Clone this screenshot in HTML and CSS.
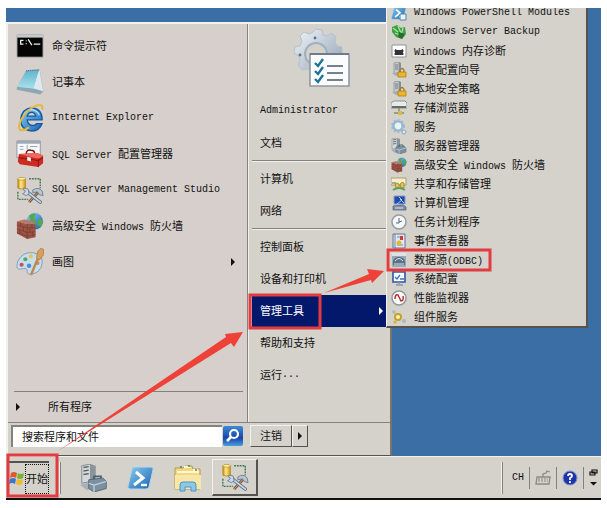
FILE: index.html
```html
<!DOCTYPE html>
<html lang="zh-CN">

<head>
  <meta charset="UTF-8" />
  <title>开始菜单</title>
  <link rel="stylesheet" href="styles.css">
</head>

<body>
  <!-- 共用图标 -->
  <svg class="defs" width="0" height="0" aria-hidden="true">
    <defs>
      <linearGradient id="blue" x1="0" y1="0" x2="1" y2="1">
        <stop offset="0" stop-color="#8ccdf0" />
        <stop offset="1" stop-color="#1763b0" />
      </linearGradient>
      <linearGradient id="gold" x1="0" y1="0" x2="1" y2="0">
        <stop offset="0" stop-color="#c98f10" />
        <stop offset=".4" stop-color="#ffe88a" />
        <stop offset="1" stop-color="#d99a14" />
      </linearGradient>
      <linearGradient id="steel" x1="0" y1="0" x2="1" y2="1">
        <stop offset="0" stop-color="#f1f5fa" />
        <stop offset="1" stop-color="#8d9dae" />
      </linearGradient>
      <linearGradient id="pad" x1="0" y1="0" x2="0" y2="1">
        <stop offset="0" stop-color="#5fb4cc" />
        <stop offset="1" stop-color="#a9e0ec" />
      </linearGradient>
    </defs>
    <symbol id="i-tools" viewBox="0 0 30 30">
      <path d="M14 3h12v10M2 17v8h11" fill="none" stroke="#3f7a4c" stroke-width="1.5" stroke-dasharray="2 1" />
      <path d="M2 3v10q4 2 8 0V3z" fill="url(#gold)" stroke="#a3740f" stroke-width=".7" />
      <ellipse cx="6" cy="3" rx="4" ry="1.5" fill="#fff0a8" stroke="#b58a20" stroke-width=".7" />
      <path d="M14 28 25 16" stroke="#7b5a3c" stroke-width="3" />
      <path d="M14 28 24 17" stroke="#d0a36c" stroke-width="1" />
      <path d="M18 15q6-4 10 1l1 5-4-1-2-3-5 1z" fill="#b9c6d2" stroke="#5d6d7d" stroke-width=".8" />
      <path d="M12 17 26 28" stroke="#5c7187" stroke-width="3.6" stroke-linecap="round" />
      <path d="M12 17 26 28" stroke="#c7d8e8" stroke-width="2" stroke-linecap="round" />
      <path d="M9 13l4 1 1 5-3 2-4-2 2-1 1-2-2-1z" fill="#c9d9e8" stroke="#5c7187" stroke-width=".8" />
    </symbol>
    <symbol id="i-firewall" viewBox="0 0 30 30">
      <circle cx="20" cy="10" r="9" fill="url(#blue)" />
      <path d="M14 4q5-4 7-1l-2 4 3 2-2 4-4-2zM24 7l5 2-2 7-4-2z" fill="#55a84c" />
      <path d="M1 10l8 2 12 1v14l-9 2-11-6z" fill="#9b5446" />
      <path d="M1 10l8 2 12 1-3-3-9-2z" fill="#b9796a" />
      <path d="M1 14l11 3h9M1 18l11 4 9-1M1 22l11 4 9-2M12 13v16M5 11v4M8 16v4M4 19v4M17 13v4M15 17v5M18 21v5" fill="none" stroke="#6d3228" stroke-width=".6" />
    </symbol>
    <symbol id="i-server" viewBox="0 0 16 16">
      <path d="M3 1l5-1v11l-5 1z" fill="#c4cace" stroke="#7b8388" stroke-width=".6" />
      <path d="M8 0l2 1v10l-2 1z" fill="#868f94" />
      <path d="M4 3h3M4 5h3M4 7h3" stroke="#555e64" stroke-width=".7" />
      <path d="M1 11l7-1 4 2-7 2z" fill="#a4abb0" />
    </symbol>
    <symbol id="i-server-lock" viewBox="0 0 16 16">
      <use href="#i-server" width="16" height="16" />
      <path d="M9 10V8q2-3 4 0v2" fill="none" stroke="#9b7a2c" stroke-width="1.3" />
      <path d="M7 10h8v5H7z" fill="#eeb42c" stroke="#ab7610" stroke-width=".7" />
    </symbol>
    <symbol id="i-server-tools" viewBox="0 0 16 16">
      <path d="M1 1l5-1v10l-5 1z" fill="#d3d8db" stroke="#7b8388" stroke-width=".5" />
      <path d="M6 0l3 1v9l-3 1z" fill="#8b9499" />
      <path d="M2 2l3-.5M2 4l3-.5M2 6l3-.5" stroke="#555e64" stroke-width=".8" />
      <path d="M0 12l7-2 3 2-6 3z" fill="#a9b0b4" />
      <path d="M8 9V7h4v2" fill="none" stroke="#4d6172" />
      <path d="M5 9l8-1 2 2v4l-7 2-3-2z" fill="#7c90a2" stroke="#4d6172" stroke-width=".5" />
      <path d="M5 11l3 1 7-2M8 12v4" fill="none" stroke="#c8d4dd" stroke-width=".7" />
    </symbol>
    <symbol id="i-ps" viewBox="0 0 28 28">
      <path d="M6 3h18q3 0 2 3l-4 17q-1 2-3 2H3q-3 0-2-3L5 5q0-2 1-2z" fill="url(#blue)" stroke="#b9d6e8" />
      <path d="M9 8l7 6-9 7" fill="none" stroke="#fff" stroke-width="3" />
      <path d="M14 21h6" stroke="#fff" stroke-width="2.4" />
    </symbol>
  </svg>

  <div class="desktop">
    <div class="workspace">
      <nav class="start-menu">
        <div class="columns">
          <div class="programs">
            <a class="program" href="#">
              <svg class="icon-lg" viewBox="0 0 30 30">
                <path d="M1 3h28v24H1z" fill="#050505" stroke="#b5b8bc" />
                <path d="M1 3h28v3H1z" fill="#c5cad0" />
                <path d="M8 9H5v4h3M11 9v1M11 12v1M13 8l4 6M19 13h7" fill="none" stroke="#eee" stroke-width="1.4" />
              </svg>
              <span>命令提示符</span>
            </a>
            <a class="program" href="#">
              <svg class="icon-lg" viewBox="0 0 30 30">
                <path d="M11 3l14-1 4 23-3 3-25-5z" fill="#e7f1f4" stroke="#9aabb2" stroke-width=".7" />
                <path d="M11 3l14-1-6 20L1 20z" fill="url(#pad)" />
                <path d="M25 2l4 23-10-3z" fill="#dde9ee" />
                <path d="M19 22l10 3-3 3-25-5v-3z" fill="#8ba8b3" />
                <path d="M11 3l14-1" stroke="#596e78" stroke-width="1.4" stroke-dasharray="1 1" />
              </svg>
              <span>记事本</span>
            </a>
            <a class="program" href="#">
              <svg class="icon-lg" viewBox="0 0 30 30">
                <path d="M28 17H12q1 6 6 6 3 0 4-2h6q-3 8-11 8Q5 28 5 17 6 5 17 4q11 1 11 13zM12 13h9q-1-4-4-4-4 0-5 4z" fill="url(#blue)" stroke="#0f59a5" stroke-width="1.4" />
                <path d="M8 12q3-6 9-6 6 1 8 6" fill="none" stroke="#b4e2fa" stroke-width="1.2" />
                <path d="M6 28C-2 28 8 7 21 2q9-3 7 4M6 28q4 0 8-3" fill="none" stroke="#e8b73d" stroke-width="2.2" />
              </svg>
              <span class="en">Internet Explorer</span>
            </a>
            <a class="program" href="#">
              <svg class="icon-lg" viewBox="0 0 30 30">
                <path d="M1 1h25v18H1z" fill="#f8f9fb" stroke="#8b929b" />
                <path d="M1 1h25v3H1z" fill="#9faab7" />
                <path d="M4 7h4M4 10h4M12 5v5M15 7h8" stroke="#8fa0b5" />
                <path d="M11 15q0-5 5-4 4 0 4 4" fill="none" stroke="#6d1713" stroke-width="1.6" />
                <path d="M3 15l20-1 6 3v8l-5 4-20-3-2-3z" fill="#cc2a22" />
                <path d="M3 15l20-1 6 3-5 3z" fill="#ee6a5c" />
                <path d="M24 20v9M3 19l21 3 5-3" fill="none" stroke="#841410" />
                <path d="M12 18l4 1v4l-4-1z" fill="#eee" />
              </svg>
              <span><span class="en">SQL Server </span>配置管理器</span>
            </a>
            <a class="program" href="#">
              <svg class="icon-lg"><use href="#i-tools" /></svg>
              <span class="en">SQL Server Management Studio</span>
            </a>
            <a class="program" href="#">
              <svg class="icon-lg"><use href="#i-firewall" /></svg>
              <span>高级安全<span class="en"> Windows </span>防火墙</span>
            </a>
            <a class="program" href="#">
              <svg class="icon-lg" viewBox="0 0 30 30">
                <path d="M2 14Q7 4 18 5q11 2 10 11-1 10-11 12-5 1-5-3 0-4-4-3-7 2-7-2 0-3 1-6z" fill="#c5dff0" stroke="#7a9db9" />
                <circle cx="6" cy="18" r="2.2" fill="#cf4a5a" />
                <circle cx="10" cy="12" r="2.2" fill="#58a85b" />
                <circle cx="16" cy="9" r="2.2" fill="#e9c64a" />
                <circle cx="14" cy="19" r="2.4" fill="#4d8fd0" />
                <circle cx="23" cy="16" r="2.2" fill="#dd844e" />
                <path d="M16 29l8-19" stroke="#c08a4c" stroke-width="2.6" />
                <path d="M22 11l1-7 4-4 3 2-1 6-4 5z" fill="#d8a05c" stroke="#986028" stroke-width=".6" />
              </svg>
              <span>画图</span>
              <i class="arrow"></i>
            </a>
            <a class="all-programs" href="#"><i class="arrow"></i>所有程序</a>
          </div>

          <div class="places">
            <svg class="avatar" viewBox="0 0 56 60">
              <path d="M22 1l6 1 1 5 4 1 5-3 4 4-1 5 2 4 5 1v8l-5 2-2 5 2 5-5 4-5-2-5 2-2 5h-6l-2-5-5-2-5 1-4-5 2-5-1-4-5-3 1-6 5-1 2-5-2-5 4-4 5 2 4-2z" fill="url(#steel)" stroke="#b4c2cf" />
              <circle cx="22" cy="26" r="11" fill="#d5d1cb" stroke="#9fb0c0" stroke-width="2" />
              <circle cx="21" cy="10" r="1.4" fill="#4f7594" />
              <circle cx="6" cy="27" r="1.4" fill="#4f7594" />
              <path d="M16 26h39v32H16z" fill="#fbfcfe" stroke="#9298a3" stroke-width="1.6" />
              <path d="M16 26h39" stroke="#6d7b8d" stroke-width="2" />
              <path d="M33 38h16M33 45h16M33 52h16" stroke="#75828e" stroke-width="1.8" />
              <path d="M21 35l3 3 5-7M21 43l3 3 5-7M21 51l3 3 5-7" fill="none" stroke="#1d7598" stroke-width="2.4" />
            </svg>
            <a class="place" href="#"><span class="en">Administrator</span></a>
            <a class="place" href="#">文档</a>
            <hr>
            <a class="place" href="#">计算机</a>
            <a class="place" href="#">网络</a>
            <hr>
            <a class="place" href="#">控制面板</a>
            <a class="place" href="#">设备和打印机</a>
            <a class="place on" href="#">管理工具<i class="arrow"></i></a>
            <a class="place" href="#">帮助和支持</a>
            <a class="place" href="#">运行<span class="en">...</span></a>
          </div>
        </div>

        <div class="menu-foot">
          <div class="search">
            <input type="text" placeholder="搜索程序和文件" aria-label="搜索程序和文件">
            <button class="search-btn" aria-label="搜索">
              <svg viewBox="0 0 20 20">
                <circle cx="11" cy="8" r="4" fill="none" stroke="#fff" stroke-width="2.2" />
                <path d="M8 11l-4 4" stroke="#fff" stroke-width="2.6" />
              </svg>
            </button>
          </div>
          <button class="logoff">注销</button>
          <button class="logoff-more" aria-label="更多"><i class="arrow"></i></button>
        </div>
      </nav>

      <!-- 管理工具子菜单 -->
      <div class="submenu">
        <a href="#">
          <svg viewBox="0 0 16 16"><use href="#i-ps" /><path d="M9 9h6v6H9z" fill="#e8f2f8" stroke="#4c88b0" /></svg>
          <span class="en">Windows PowerShell Modules</span>
        </a>
        <a href="#">
          <svg viewBox="0 0 16 16">
            <path d="M1 3l5-2 4 3 4-1 1 7-4 5-6-2-4-5z" fill="#3fa046" />
            <path d="M2 4l5 4M7 2l3 7M4 9l8 3M12 4l-2 8" stroke="#a6e59b" stroke-width="1.3" />
            <path d="M8 8l6 2-3 5-4-2z" fill="#276c32" />
          </svg>
          <span class="en">Windows Server Backup</span>
        </a>
        <a href="#">
          <svg viewBox="0 0 16 16">
            <path d="M1 2h14v12H1z" fill="#fff" stroke="#8c939a" />
            <path d="M4 6l2 1h4l2-1v6H4z" fill="#333" />
            <path d="M3 8h10M3 11h10" stroke="#555" stroke-dasharray="1 8" />
          </svg>
          <span><span class="en">Windows </span>内存诊断</span>
        </a>
        <a href="#"><svg><use href="#i-server-lock" /></svg><span>安全配置向导</span></a>
        <a href="#"><svg><use href="#i-server-lock" /></svg><span>本地安全策略</span></a>
        <a href="#">
          <svg viewBox="0 0 16 16">
            <path d="M0 3l3-2h11l2 2v5H0z" fill="#e8ebe8" stroke="#7b8281" stroke-width=".8" />
            <path d="M1 7h14" stroke="#656d6b" stroke-width="2" />
            <path d="M8 8v5M3 13h10" stroke="#7f8b86" stroke-width="1.4" />
            <path d="M7 11h4v4H7z" fill="#dfbb3c" />
          </svg>
          <span>存储浏览器</span>
        </a>
        <a href="#">
          <svg viewBox="0 0 16 16">
            <circle cx="7" cy="7" r="4.6" fill="#e8f2f8" stroke="#92b7cf" stroke-width="2.4" />
            <circle cx="7" cy="7" r="6.2" fill="none" stroke="#92b7cf" stroke-width="1.3" stroke-dasharray="2 2" />
            <circle cx="13" cy="13" r="2" fill="#dce8ef" stroke="#8ba8bb" />
          </svg>
          <span>服务</span>
        </a>
        <a href="#"><svg><use href="#i-server-tools" /></svg><span>服务器管理器</span></a>
        <a href="#"><svg><use href="#i-firewall" /></svg><span>高级安全<span class="en"> Windows </span>防火墙</span></a>
        <a href="#">
          <svg viewBox="0 0 16 16">
            <path d="M0 2h15v7H0z" fill="#f6edc9" stroke="#9b8f62" stroke-width=".8" />
            <path d="M1 7h4" stroke="#666" />
            <path d="M4 8q2-2 4 0v4H5zM9 8q2-3 4-1v5h-3z" fill="#e6c14c" stroke="#8b7a2f" stroke-width=".7" />
            <path d="M2 14q6-4 12 0" fill="none" stroke="#57a460" stroke-width="2" />
          </svg>
          <span>共享和存储管理</span>
        </a>
        <a href="#">
          <svg viewBox="0 0 16 16">
            <path d="M3 1h11v8H3z" fill="#1e4bb0" stroke="#8ba0c0" />
            <path d="M8 2l3 3-5 4M9 4l4 4" fill="none" stroke="#a9cbff" />
            <path d="M2 11l10-1 3 2v3H2z" fill="#7b8fa8" stroke="#4d5e75" stroke-width=".7" />
            <path d="M4 13h8" stroke="#dbe4ed" />
          </svg>
          <span>计算机管理</span>
        </a>
        <a href="#">
          <svg viewBox="0 0 16 16">
            <circle cx="8" cy="8" r="7" fill="#f5f7f8" stroke="#969ea3" stroke-width="1.5" />
            <path d="M8 4v5H5M8 8l3-1" fill="none" stroke="#506a80" />
          </svg>
          <span>任务计划程序</span>
        </a>
        <a href="#">
          <svg viewBox="0 0 16 16">
            <path d="M2 1h12v14H2z" fill="#dfe8f2" stroke="#64748c" />
            <path d="M4 1v14M6 4h6M6 12h6" stroke="#6c87aa" />
            <path d="M9 3h3v4H9z" fill="#cf3a35" />
            <circle cx="8" cy="10" r="2.5" fill="#e4b92d" />
          </svg>
          <span>事件查看器</span>
        </a>
        <a href="#">
          <svg viewBox="0 0 16 16">
            <path d="M1 1h14v14H1z" fill="#9aa9b7" />
            <path d="M1 1h14v3H1z" fill="#dce3e8" />
            <path d="M2 9q1-4 6-4t6 4v4H2z" fill="#5b7385" />
            <path d="M4 9q4-5 8 0M3 12h10" fill="none" stroke="#d6e1e8" />
          </svg>
          <span>数据源<span class="en">(ODBC)</span></span>
        </a>
        <a href="#">
          <svg viewBox="0 0 16 16">
            <path d="M2 1h12v10H2z" fill="#fff" stroke="#3156a8" stroke-width="1.6" />
            <path d="M4 6l2 2 3-4M9 8h4" fill="none" stroke="#3670c4" stroke-width="1.3" />
            <path d="M8 11v2M5 14h7" stroke="#8798b3" stroke-width="1.6" />
          </svg>
          <span>系统配置</span>
        </a>
        <a href="#">
          <svg viewBox="0 0 16 16">
            <circle cx="8" cy="8" r="7" fill="#fcfcfc" stroke="#92999c" stroke-width="1.5" />
            <path d="M4 9q0-5 3-4l3 6q3 0 2-5" fill="none" stroke="#ba2e33" stroke-width="1.5" />
          </svg>
          <span>性能监视器</span>
        </a>
        <a href="#">
          <svg viewBox="0 0 16 16">
            <circle cx="7" cy="8" r="3" fill="#fff3b5" stroke="#c5a12a" stroke-width="2" />
            <circle cx="3" cy="3" r="1.8" fill="#a9b8c3" />
            <circle cx="13" cy="12" r="2" fill="#a9b8c3" />
            <circle cx="4" cy="13" r="1.6" fill="#d6af35" />
          </svg>
          <span>组件服务</span>
        </a>
      </div>
    </div>

    <div class="taskbar">
      <button class="start">
        <svg viewBox="0 0 16 16">
          <path d="M2 2q3-2 6 0L7 7Q4 5 1 7z" fill="#e2572b" />
          <path d="M9 2q3 2 6 0l-1 5q-3 2-6 0z" fill="#73b435" />
          <path d="M1 8q3-2 6 0l-1 5q-3-2-6 0z" fill="#3a78cc" />
          <path d="M8 8q3 2 6 0l-1 5q-3 2-6 0z" fill="#f2b92b" />
        </svg>
        <span>开始</span>
      </button>
      <i class="divider"></i>
      <div class="pinned">
        <button aria-label="服务器管理器"><svg><use href="#i-server-tools" /></svg></button>
        <button aria-label="PowerShell"><svg><use href="#i-ps" /></svg></button>
        <button aria-label="资源管理器">
          <svg viewBox="0 0 28 28">
            <path d="M1 4h8l2-2h7l1 3h7v20H1z" fill="#f2d886" stroke="#b99a48" />
            <path d="M3 8h22M10 3h6M19 6h5" stroke="#fff6d2" stroke-width="2" />
            <path d="M7 2v2M15 1v2M22 5v2" stroke="#548e57" stroke-width="1.6" />
            <path d="M1 11h26v14H1z" fill="#f8e6a7" />
            <path d="M6 27v-6q0-3 3-3h10q3 0 3 3v6h-5v-4h-6v4z" fill="#8cc6e8" stroke="#4e96c2" />
          </svg>
        </button>
        <button class="active" aria-label="SQL Server Management Studio"><svg><use href="#i-tools" /></svg></button>
      </div>
      <div class="tray">
        <i class="divider"></i>
        <span class="en">CH</span>
        <i class="line"></i>
        <svg viewBox="0 0 16 16">
          <path d="M2 7h13l-1 7H1zM8 7V4l3-1 1-2 3 1" fill="none" stroke="#8c8a86" stroke-width="1.3" />
          <path d="M3 9h10M3 11h10" stroke="#8c8a86" stroke-dasharray="2 1" />
        </svg>
        <i class="line"></i>
        <svg viewBox="0 0 16 16">
          <circle cx="8" cy="8" r="7" fill="#1d35a8" stroke="#7f91d4" />
          <path d="M6 6q0-2 2-2t2 2q0 1-2 2v2M8 11v2" fill="none" stroke="#fff" stroke-width="1.8" />
        </svg>
        <i class="line"></i>
        <svg class="restore" viewBox="0 0 9 20">
          <path d="M3 2h5v3H3zM1 4h5v3H1z" fill="#d5d1cb" stroke="#111" stroke-width="1.2" />
          <path d="M1 14h7l-3.500 3.500z" fill="#111" />
        </svg>
      </div>
    </div>

    <!-- 步骤标注 -->
    <svg class="marks" width="595" height="492" viewBox="0 0 595 492">
      <rect x="2" y="447" width="49" height="41" />
      <rect x="244" y="287" width="70" height="33" />
      <rect x="382" y="242" width="102" height="20" />
      <path d="M52 443 220 329 219 326 237 324 228 339 225 335z" />
      <path d="M318 285 363 266 361 261 378 263 366 275 365 272z" />
    </svg>
  </div>
</body>

</html>
```
FILE: styles.css
```css
* {
  margin: 0;
  padding: 0;
  box-sizing: border-box;
}

body {
  background-color: #fff;
  color: #111;
  font-family: "Liberation Sans", "Noto Sans CJK SC", sans-serif;
  font-size: 11px;
  line-height: 16px;
}

a {
  color: inherit;
  text-decoration: none;
}

button,
input {
  font: inherit;
  color: inherit;
  border: 0;
  background: none;
}

svg {
  display: block;
  flex: none;
}

.defs {
  position: absolute;
}

.en {
  font-family: "Liberation Mono", monospace;
  font-size: 10px;
  line-height: 12px;
  white-space: pre;
}

.arrow {
  width: 0;
  height: 0;
  border: 4px solid transparent;
  border-left-color: currentColor;
  border-right-width: 0;
}

.desktop {
  position: relative;
  display: flex;
  flex-direction: column;
  height: calc(100vh - 16px);
  min-height: 480px;
  margin: 8px 6px;
  overflow: hidden;
  background-color: #3b6ea5;
}

.workspace {
  position: relative;
  flex: 1;
  display: flex;
  padding-top: 14px;
}

/* 开始菜单 */
.start-menu {
  display: flex;
  flex-direction: column;
  width: 386px;
  background-color: #d5d1cb;
  border: 2px solid #f3f1ee;
  border-right-color: #77746f;
  border-bottom: 1px solid #55534f;
}

.columns {
  flex: 1;
  display: flex;
}

.programs {
  width: 240px;
  display: flex;
  flex-direction: column;
  padding: 4px 4px 0 6px;
  background-color: #d6cfcb;
  border-right: 1px solid #85827d;
}

.program {
  display: flex;
  align-items: center;
  gap: 8px;
  height: 36px;
  padding: 0 8px 0 2px;
}

.program .arrow,
.place .arrow {
  margin-left: auto;
}

.icon-lg {
  width: 28px;
  height: 28px;
}

.all-programs {
  display: flex;
  align-items: center;
  gap: 28px;
  height: 31px;
  margin-top: auto;
  padding-left: 2px;
  border-top: 1px solid #85827d;
}

.places {
  flex: 1;
  padding-left: 3px;
  border-left: 1px solid #f3f1ee;
}

.avatar {
  width: 56px;
  height: 60px;
  margin: 4px 0 7px 42px;
}

.place {
  display: flex;
  align-items: center;
  height: 32px;
  padding: 0 7px 0 8px;
}

.place.on {
  color: #fff;
  background-color: #04186b;
}

.places hr {
  height: 2px;
  margin: 1px 0;
  border: 0;
  border-top: 1px solid #85827d;
  border-bottom: 1px solid #f3f1ee;
}

.menu-foot {
  display: flex;
  align-items: flex-start;
  height: 33px;
  padding: 2px 3px;
  border-top: 1px solid #85827d;
}

.search {
  display: flex;
  width: 233px;
}

.search input {
  flex: 1;
  min-width: 0;
  height: 22px;
  padding: 0 9px;
  background-color: #fff;
  border: 1px solid #85827d;
  border-width: 2px 0 0 2px;
}

.search input::placeholder {
  color: #111;
}

.search-btn {
  width: 20px;
  height: 20px;
  margin: 1px;
  border-radius: 2px;
  background: linear-gradient(#3f8ad8, #1746a8 60%, #4aa0e0);
}

.logoff,
.logoff-more {
  height: 22px;
  border: 1px solid #f3f1ee;
  border-right-color: #55534f;
  border-bottom-color: #55534f;
}

.logoff {
  margin-left: 6px;
  padding: 0 9px;
}

.logoff-more {
  padding: 0 5px;
}

.logoff-more .arrow {
  display: block;
}

/* 子菜单 */
.submenu {
  position: absolute;
  top: -5px;
  left: 380px;
  width: 202px;
  background-color: #d5d1cb;
  border: 1px solid #f3f1ee;
  border-top: 0;
  border-right: 2px solid #55534f;
  border-bottom: 2px solid #55534f;
}

.submenu a {
  display: flex;
  align-items: center;
  gap: 7px;
  height: 19px;
  padding-left: 4px;
  white-space: nowrap;
}

.submenu svg {
  width: 16px;
  height: 16px;
}

/* 任务栏 */
.taskbar {
  display: flex;
  align-items: center;
  height: 44px;
  padding: 0 3px;
  background-color: #d5d1cb;
  border-top: 1px solid #f3f1ee;
  border-bottom: 2px solid #111;
}

.start {
  display: flex;
  align-items: center;
  height: 34px;
  border-top: 2px solid #55534f;
}

.start svg {
  width: 16px;
  height: 16px;
}

.start span {
  line-height: 28px;
  border: 1px dotted #111;
}

.divider {
  width: 2px;
  height: 32px;
  margin: 0 10px;
  background-color: #f3f1ee;
  border-right: 1px solid #85827d;
}

.pinned {
  display: flex;
  gap: 1px;
}

.pinned button {
  display: flex;
  align-items: center;
  justify-content: center;
  width: 46px;
  height: 37px;
}

.pinned svg {
  width: 28px;
  height: 28px;
}

.pinned .active {
  border: 1px solid #f3f1ee;
  border-right: 2px solid #55534f;
  border-bottom: 2px solid #55534f;
}

.tray {
  display: flex;
  align-items: center;
  gap: 5px;
  margin-left: auto;
}

.tray .divider {
  margin: 0 4px 0 0;
}

.tray .line {
  width: 1px;
  height: 22px;
  background-color: #85827d;
}

.tray svg {
  width: 16px;
  height: 16px;
}

.tray .restore {
  width: 9px;
  height: 20px;
}

/* 红框和箭头 */
.marks {
  position: absolute;
  top: 0;
  left: 0;
  pointer-events: none;
}

.marks rect {
  fill: none;
  stroke: #e23b40;
  stroke-width: 3;
}

.marks path {
  fill: #ee4238;
}
```
